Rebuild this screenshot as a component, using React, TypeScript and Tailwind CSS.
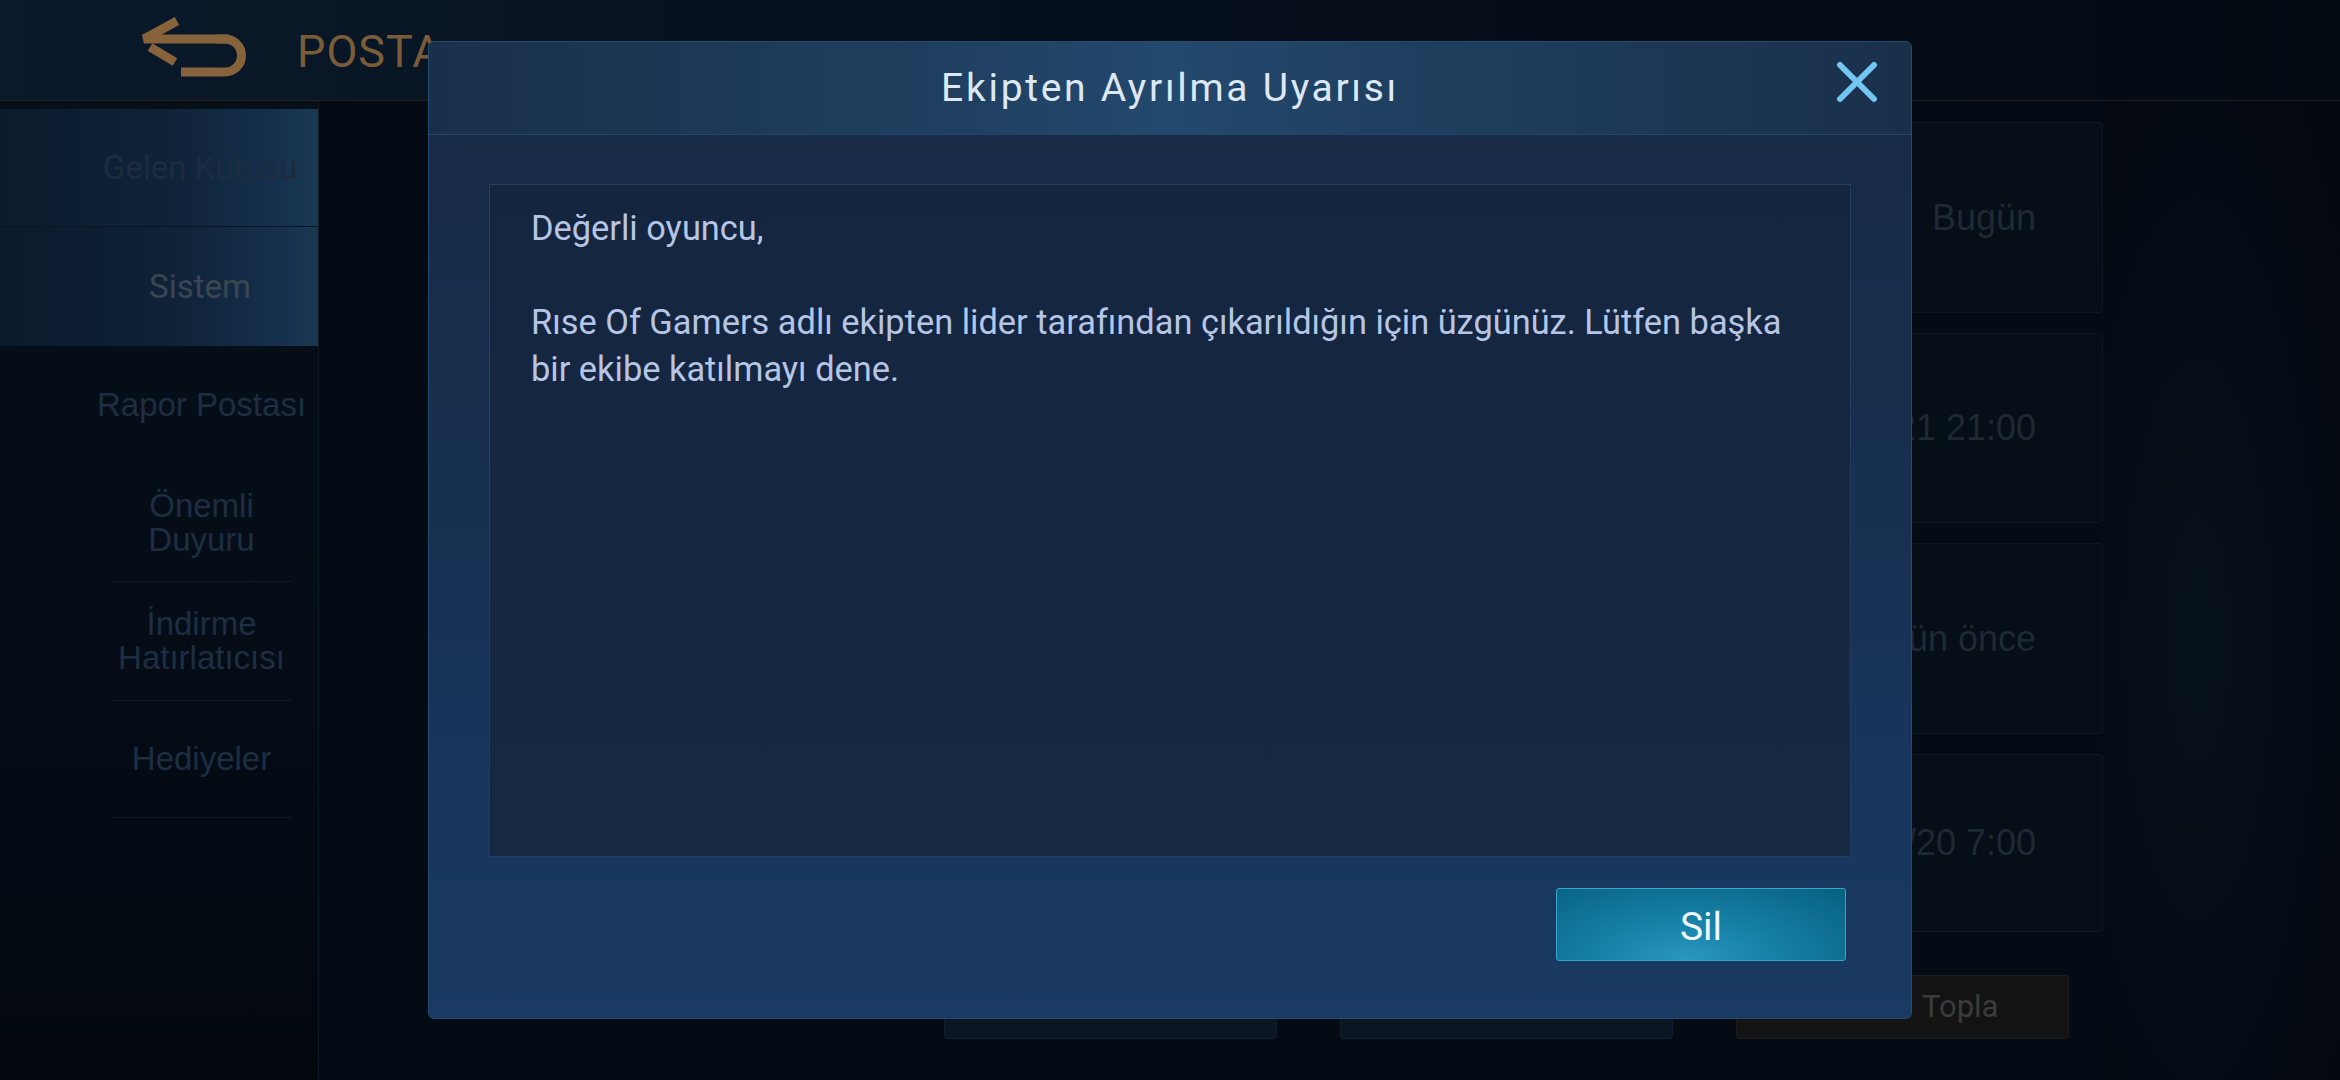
import React from "react";

function BackIcon() {
  return (
    <svg width="112" height="60" viewBox="0 0 112 60" className="ml-[137px] mt-[17px] shrink-0">
      <g fill="none" stroke="#86633b" strokeWidth="9" strokeLinejoin="miter">
        <path d="M40 4 L7 22 L92 22" />
        <path d="M13 30 L38 45" />
        <path d="M80 22 H88 A16.5 16.5 0 0 1 88 55 H44" />
      </g>
    </svg>
  );
}

function CloseIcon() {
  return (
    <svg width="42" height="42" viewBox="0 0 42 42">
      <g stroke="#74c6f2" strokeWidth="6" strokeLinecap="round">
        <path d="M4 4 L38 38" />
        <path d="M38 4 L4 38" />
      </g>
    </svg>
  );
}

const cards = [
  { text: "Bugün", h: "h-[191px]" },
  { text: "2021/12/21 21:00", h: "h-[190px]" },
  { text: "3 gün önce", h: "h-[191px]" },
  { text: "2021/11/20 7:00", h: "h-[178px]" },
];

export default function App() {
  return (
    <div className="relative w-[2340px] h-[1080px] overflow-hidden bg-[#050b14] font-['Roboto',sans-serif]">
      {/* top bar */}
      <div className="h-[101px] flex items-start border-b border-[#241f18] bg-[linear-gradient(90deg,#0a1a2b_0%,#07121f_30%,#040a12_100%)]">
        <BackIcon />
        <span className="ml-[48px] mt-[29px] text-[45px] leading-[45px] text-[#7a5c3a] tracking-[1px]">POSTA</span>
      </div>

      <div className="flex h-[979px]">
        {/* sidebar */}
        <div className="w-[319px] shrink-0 border-r border-[#0e1926] pt-[8px] flex flex-col bg-[linear-gradient(180deg,#060f1a_0%,#050c16_60%,#03080f_100%)]">
          <div className="h-[118px] flex items-center justify-center pl-[82px] bg-[linear-gradient(90deg,#0b1b2d_0%,#0f2339_55%,#16324f_90%,#1a3a52_100%)] border-b border-[#0a1524]">
            <span className="text-[33px] text-[#1c2c40] whitespace-nowrap">Gelen Kutusu</span>
          </div>
          <div className="h-[119px] flex items-center justify-center pl-[82px] bg-[linear-gradient(90deg,#0b1a2c_0%,#0f2238_55%,#16314e_90%,#1a3951_100%)]">
            <span className="text-[33px] text-[#3a4652]">Sistem</span>
          </div>
          <div className="ml-[112px] w-[179px] flex flex-col font-['Liberation_Sans',sans-serif] text-[#1d2e43] text-[33px] leading-[34px] text-center">
            <div className="h-[118px] flex items-center justify-center whitespace-nowrap">Rapor Postası</div>
            <div className="h-[118px] flex items-center justify-center border-b border-[#0f1b28]">Önemli<br />Duyuru</div>
            <div className="h-[119px] flex items-center justify-center border-b border-[#0f1b28] whitespace-nowrap">İndirme<br />Hatırlatıcısı</div>
            <div className="h-[117px] flex items-center justify-center border-b border-[#0f1b28]">Hediyeler</div>
          </div>
        </div>

        {/* main */}
        <div className="flex-1 flex">
          <div className="w-[1784px] flex flex-col pt-[21px]">
            <div className="flex flex-col gap-[20px] ml-[260px]">
              {cards.map((c) => (
                <div
                  key={c.text}
                  className={`${c.h} rounded-[4px] border border-[#0d1824] bg-[#060e18] flex items-center justify-end pr-[66px]`}
                >
                  <span className="text-[36px] text-[#1f2934] font-['Liberation_Sans',sans-serif] whitespace-nowrap">{c.text}</span>
                </div>
              ))}
            </div>
            <div className="flex justify-end gap-[63px] pr-[34px] mt-[43px]">
              <div className="w-[333px] h-[64px] rounded-[3px] border border-[#111e2c] bg-[#0a1622]" />
              <div className="w-[333px] h-[64px] rounded-[3px] border border-[#111e2c] bg-[#0a1622]" />
              <div className="w-[333px] h-[64px] rounded-[3px] border border-[#1c1c1c] bg-[#131313] flex items-center pl-[185px]">
                <span className="text-[31px] text-[#3b3b3b]">Topla</span>
              </div>
            </div>
          </div>
          <div className="flex-1 bg-[radial-gradient(ellipse_at_40%_55%,#08121d_0%,#050b14_60%,#03070d_100%)]" />
        </div>
      </div>

      {/* modal */}
      <div className="absolute left-[428px] top-[41px] w-[1484px] h-[978px] rounded-[6px] border border-[#264a70] flex flex-col overflow-hidden bg-[linear-gradient(180deg,#172a45_0%,#172d4b_30%,#18345a_70%,#193a62_100%)]">
        <div className="relative h-[93px] shrink-0 border-b border-[#27476a] flex items-center justify-center bg-[linear-gradient(90deg,#19304b_0%,#1f3f60_35%,#23496e_50%,#1f3f60_65%,#19304b_100%)]">
          <span className="text-[39px] text-[#dde8f4] tracking-[2.7px]">Ekipten Ayrılma Uyarısı</span>
          <div className="absolute right-[33px] top-[19px]">
            <CloseIcon />
          </div>
        </div>
        <div className="flex-1 px-[60px] pt-[49px] flex flex-col">
          <div className="h-[673px] border border-[#223f5f] bg-[linear-gradient(180deg,#142540_0%,#162943_100%)] pl-[41px] pr-[20px] pt-[20px] text-[34.4px] leading-[47px] text-[#b7c5e5] whitespace-nowrap">
            <p>Değerli oyuncu,</p>
            <p>&nbsp;</p>
            <p>
              Rıse Of Gamers adlı ekipten lider tarafından çıkarıldığın için üzgünüz. Lütfen başka
              <br />
              bir ekibe katılmayı dene.
            </p>
          </div>
          <div className="flex justify-end pr-[5px] mt-[31px]">
            <button className="w-[290px] h-[73px] pt-[5px] rounded-[3px] border border-[#3aa6cd] bg-[radial-gradient(ellipse_at_45%_100%,#2a98be_0%,#1680a7_40%,#07607f_100%)] text-[39px] text-[#eef6fa] flex items-center justify-center">
              Sil
            </button>
          </div>
        </div>
      </div>
    </div>
  );
}
